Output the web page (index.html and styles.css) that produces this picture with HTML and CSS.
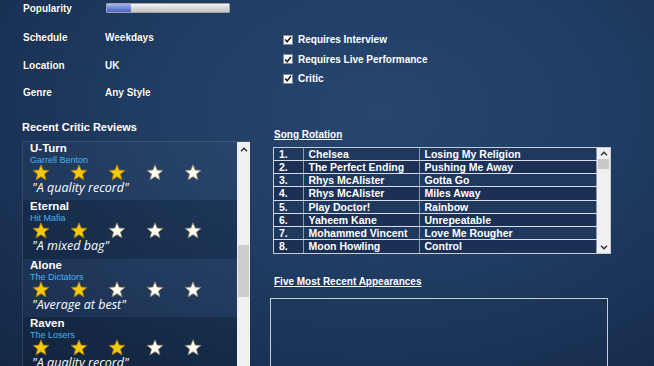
FILE: index.html
```html
<!DOCTYPE html>
<html>
<head>
	<title>Artist Profile</title>
	<meta charset="utf-8">
	<link rel="stylesheet" href="styles.css">
</head>
<body>
	<div class="page">
		<!-- left column -->
		<section class="left">
			<div class="pop">
				<span class="label">Popularity</span>
				<div class="bar"><div class="fill"></div></div>
			</div>

			<div class="info">
				<span class="label">Schedule</span><span class="label">Weekdays</span>
				<span class="label">Location</span><span class="label">UK</span>
				<span class="label">Genre</span><span class="label">Any Style</span>
			</div>

			<h3 class="title">Recent Critic Reviews</h3>

			<div class="reviews">
				<div class="items">
					<div class="review">
						<div class="song">U-Turn</div>
						<div class="artist">Garrell Benton</div>
						<div class="stars" data-rating="3"></div>
						<div class="quote">"A quality record"</div>
					</div>
					<div class="review">
						<div class="song">Eternal</div>
						<div class="artist">Hit Mafia</div>
						<div class="stars" data-rating="2"></div>
						<div class="quote">"A mixed bag"</div>
					</div>
					<div class="review">
						<div class="song">Alone</div>
						<div class="artist">The Dictators</div>
						<div class="stars" data-rating="2"></div>
						<div class="quote">"Average at best"</div>
					</div>
					<div class="review">
						<div class="song">Raven</div>
						<div class="artist">The Losers</div>
						<div class="stars" data-rating="3"></div>
						<div class="quote">"A quality record"</div>
					</div>
				</div>
				<div class="scroll big">
					<svg class="arrow" width="8" height="5" viewBox="0 0 8 5"><polyline points="1,4.2 4,1.2 7,4.2" fill="none" stroke="#333" stroke-width="1.5"/></svg>
					<div class="thumb"></div>
				</div>
			</div>
		</section>

		<!-- right column -->
		<section class="right">
			<div class="checks">
				<label class="check"><span class="box"><svg width="9" height="9" viewBox="0 0 9 9"><polyline points="1.3,4.6 3.5,7 7.8,1.6" fill="none" stroke="#1b1b1b" stroke-width="1.7"/></svg></span>Requires Interview</label>
				<label class="check"><span class="box"><svg width="9" height="9" viewBox="0 0 9 9"><polyline points="1.3,4.6 3.5,7 7.8,1.6" fill="none" stroke="#1b1b1b" stroke-width="1.7"/></svg></span>Requires Live Performance</label>
				<label class="check"><span class="box"><svg width="9" height="9" viewBox="0 0 9 9"><polyline points="1.3,4.6 3.5,7 7.8,1.6" fill="none" stroke="#1b1b1b" stroke-width="1.7"/></svg></span>Critic</label>
			</div>

			<h3 class="head song-head">Song Rotation</h3>
			<div class="rotation">
				<table>
					<tr><td>1.</td><td>Chelsea</td><td>Losing My Religion</td></tr>
					<tr><td>2.</td><td>The Perfect Ending</td><td>Pushing Me Away</td></tr>
					<tr><td>3.</td><td>Rhys McAlister</td><td>Gotta Go</td></tr>
					<tr><td>4.</td><td>Rhys McAlister</td><td>Miles Away</td></tr>
					<tr><td>5.</td><td>Play Doctor!</td><td>Rainbow</td></tr>
					<tr><td>6.</td><td>Yaheem Kane</td><td>Unrepeatable</td></tr>
					<tr><td>7.</td><td>Mohammed Vincent</td><td>Love Me Rougher</td></tr>
					<tr><td>8.</td><td>Moon Howling</td><td>Control</td></tr>
				</table>
				<div class="scroll small">
					<svg class="arrow" width="8" height="5" viewBox="0 0 8 5"><polyline points="1,4.2 4,1.2 7,4.2" fill="none" stroke="#333" stroke-width="1.5"/></svg>
					<div class="thumb"></div>
					<svg class="arrow down" width="8" height="5" viewBox="0 0 8 5"><polyline points="1,0.8 4,3.8 7,0.8" fill="none" stroke="#333" stroke-width="1.5"/></svg>
				</div>
			</div>

			<h3 class="head appear-head">Five Most Recent Appearances</h3>
			<div class="appearances"></div>
		</section>
	</div>

<script>
"use strict";
const starSvg = (on) => {
	const fill = on ? '#f6c90e' : '#fffdf2';
	const edge = on ? '#a07a08' : '#8a8264';
	return '<svg width="18" height="17" viewBox="0 0 18 17"><polygon points="9,0.8 11.2,6.1 17,6.4 12.5,10.1 14,15.9 9,12.7 4,15.9 5.5,10.1 1,6.4 6.8,6.1" fill="' + fill + '" stroke="' + edge + '" stroke-width="0.8" stroke-linejoin="round"/></svg>';
}

document.querySelectorAll('.stars').forEach(el => {
	const rating = +el.dataset.rating;
	let html = '';
	for(let i = 0; i < 5; i++) html += starSvg(i < rating);
	el.innerHTML = html;
});
</script>
</body>
</html>
```

FILE: styles.css
```css
* {
	margin: 0;
	padding: 0;
	box-sizing: border-box;
}

html, body {
	height: 100%;
}

body {
	font-family: "Liberation Sans", Arial, sans-serif;
	color: #fff;
	background: radial-gradient(ellipse at 58% 30%, #27476f 0%, #203c62 45%, #182f51 80%, #142845 100%);
	overflow: hidden;
}

.page {
	display: flex;
	padding-left: 22px;
	height: 100%;
}

.label {
	font-size: 10px;
	font-weight: bold;
	text-shadow: 0 0 1px rgba(0,0,0,0.6);
}

/* left column */
.left {
	width: 228px;
	padding-top: 2px;
}

.pop {
	display: flex;
	align-items: center;
	height: 12px;
	padding-left: 1px;
}

.pop .label {
	width: 83px;
}

.bar {
	width: 124px;
	height: 10px;
	background: linear-gradient(#f4f4f4, #d8d8d8 50%, #c6c6c6);
	border: 1px solid #9aa4b0;
	border-radius: 1px;
}

.fill {
	width: 24px;
	height: 100%;
	background: linear-gradient(#a8b8ec, #6e86d8 50%, #4b63bf);
}

.info {
	display: grid;
	grid-template-columns: 82px auto;
	grid-auto-rows: 27.5px;
	align-items: center;
	margin-top: 10px;
	padding-left: 1px;
}

.title {
	font-size: 11px;
	font-weight: bold;
	height: 14px;
	line-height: 14px;
	margin-top: 13px;
}

.reviews {
	display: flex;
	margin-top: 7px;
	height: 240px;
	border-top: 1px solid rgba(255,255,255,0.12);
	border-left: 1px solid rgba(255,255,255,0.1);
}

.items {
	width: 214px;
	overflow: hidden;
}

.review {
	height: 58.6px;
	padding-left: 7px;
	background: rgba(255,255,255,0.025);
}

.review:nth-child(even) {
	background: rgba(0,0,0,0.13);
}

.song {
	font-size: 11.5px;
	font-weight: bold;
	line-height: 13px;
	height: 13px;
}

.artist {
	font-size: 9px;
	color: #48b2ee;
	line-height: 10px;
	height: 10px;
}

.stars {
	display: flex;
	gap: 20px;
	height: 15px;
	padding-left: 2px;
}

.stars svg {
	flex: none;
	margin-top: -1px;
}

.quote {
	font-family: "Open Sans", sans-serif;
	font-style: italic;
	font-size: 12.5px;
	line-height: 15px;
	padding-left: 2px;
}

.scroll {
	background: #f0f0f0;
	display: flex;
	flex-direction: column;
	align-items: center;
}

.scroll .arrow {
	margin-top: 5px;
	flex: none;
}

.scroll.big {
	width: 13px;
}

.scroll.big .thumb {
	width: 11px;
	height: 52px;
	margin-top: 93px;
	background: #cdcdcd;
}

/* right column */
.right {
	width: 345px;
	margin-left: 20px;
}

.checks {
	margin-top: 30px;
	padding-left: 13px;
}

.check {
	display: flex;
	align-items: center;
	height: 19.5px;
	font-size: 10px;
	font-weight: bold;
}

.box {
	width: 10px;
	height: 10px;
	background: #fff;
	border: 1px solid #7d8aa0;
	margin-right: 5px;
	display: flex;
	align-items: center;
	justify-content: center;
}

.head {
	font-size: 10px;
	font-weight: bold;
	text-decoration: underline;
	height: 14px;
	line-height: 14px;
	padding-left: 4px;
}

.song-head {
	margin-top: 39px;
}

.rotation {
	display: flex;
	margin: 5px 0 0 3px;
	width: 338px;
	height: 107px;
	border: 1px solid #c4ccd8;
}

table {
	border-collapse: collapse;
	width: 324px;
}

td {
	height: 13.1px;
	font-size: 10.5px;
	font-weight: bold;
	padding: 1px 0 0 5px;
	background: #1b3054;
	border-bottom: 1px solid #d6dde8;
	border-right: 1px solid #8d99ac;
	line-height: 11px;
}

tr:nth-child(odd) td {
	background: #1f385e;
}

tr:last-child td {
	border-bottom: none;
}

td:first-child {
	width: 29px;
}

td:nth-child(2) {
	width: 116px;
}

.scroll.small {
	width: 13px;
}

.scroll.small .arrow {
	margin-top: 3px;
}

.scroll.small .thumb {
	width: 11px;
	height: 10px;
	margin-top: 3px;
	background: #c8c8c8;
}

.scroll.small .arrow.down {
	margin-top: auto;
	margin-bottom: 3px;
}

.appear-head {
	margin-top: 21px;
}

.appearances {
	margin-top: 9px;
	width: 338px;
	height: 120px;
	border: 1px solid #c4ccd8;
}
```
